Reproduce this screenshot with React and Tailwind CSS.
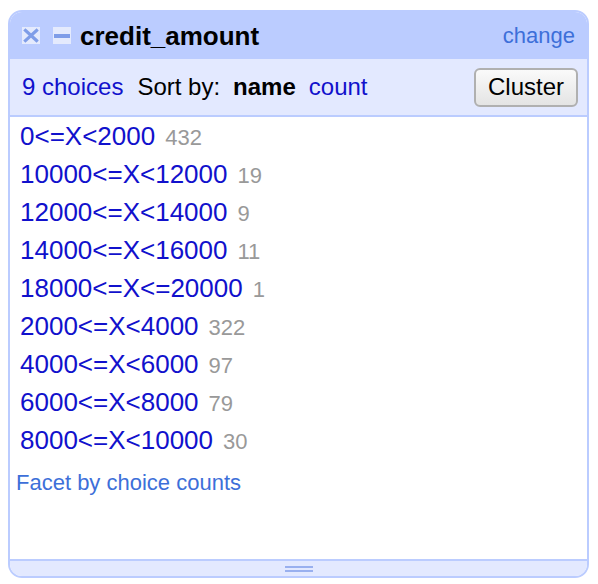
import React from "react";

const rows = [
  ["0<=X<2000", 432],
  ["10000<=X<12000", 19],
  ["12000<=X<14000", 9],
  ["14000<=X<16000", 11],
  ["18000<=X<=20000", 1],
  ["2000<=X<4000", 322],
  ["4000<=X<6000", 97],
  ["6000<=X<8000", 79],
  ["8000<=X<10000", 30],
];

function XIcon() {
  return (
    <svg width="18" height="17" viewBox="0 0 18 17">
      <rect x="0" y="0" width="18" height="17" fill="#e4eafd" />
      <path d="M3.5 3.5 L14.5 13.5 M14.5 3.5 L3.5 13.5" stroke="#7f9de8" strokeWidth="3.2" strokeLinecap="square" />
    </svg>
  );
}

function MinusIcon() {
  return (
    <svg width="18" height="17" viewBox="0 0 18 17">
      <rect x="0" y="0" width="18" height="17" fill="#e4eafd" />
      <rect x="1" y="7" width="16" height="4" fill="#7f9de8" />
    </svg>
  );
}

export default function App() {
  return (
    <div className="w-[598px] h-[584px] bg-white pt-[10px] pl-[8px]" style={{ fontFamily: '"Liberation Sans", Arial, sans-serif' }}>
      <div className="w-[581px] h-[568px] rounded-[14px] border-2 border-[#bbccff] overflow-hidden flex flex-col">
        <div className="h-[47px] bg-[#bbccff] flex items-center pl-[12px] pr-[12px] shrink-0">
          <XIcon />
          <div className="ml-[13px]"><MinusIcon /></div>
          <span className="ml-[9px] text-[26px] font-bold text-black leading-none">credit_amount</span>
          <span className="ml-auto text-[22px] text-[#3d6fd9] leading-none">change</span>
        </div>
        <div className="h-[58px] bg-[#e3e9ff] flex items-center pl-[12px] pr-[9px] shrink-0 border-b-2 border-[#bbccff]">
          <span className="text-[24px] text-[#1111cc]">9 choices</span>
          <span className="ml-[14px] text-[24px] text-black">Sort by:</span>
          <span className="ml-[13px] text-[24px] font-bold text-black">name</span>
          <span className="ml-[13px] text-[24px] text-[#1111cc]">count</span>
          <button className="ml-auto w-[104px] h-[39px] rounded-[6px] border-2 border-[#b0b0b0] bg-gradient-to-b from-[#fafafa] to-[#e4e4e4] text-[24px] text-black leading-none">
            Cluster
          </button>
        </div>
        <div className="flex-1 bg-white pl-[10px]">
          {rows.map(([label, count]) => (
            <div key={label} className="h-[38px] leading-[38px] whitespace-nowrap">
              <span className="text-[26px] text-[#1111cc]">{label}</span>
              <span className="ml-[10px] text-[22px] text-[#999999]">{count}</span>
            </div>
          ))}
          <div className="mt-[9px] -ml-[4px] h-[30px] leading-[30px] text-[22px] text-[#3d6fd9]">Facet by choice counts</div>
        </div>
        <div className="h-[17px] bg-[#e3e9ff] border-t-2 border-[#bbccff] flex items-center justify-center shrink-0">
          <div className="w-[28px] flex flex-col gap-[2px]">
            <div className="h-[2px] bg-[#99b0ef]" />
            <div className="h-[2px] bg-[#99b0ef]" />
          </div>
        </div>
      </div>
    </div>
  );
}
